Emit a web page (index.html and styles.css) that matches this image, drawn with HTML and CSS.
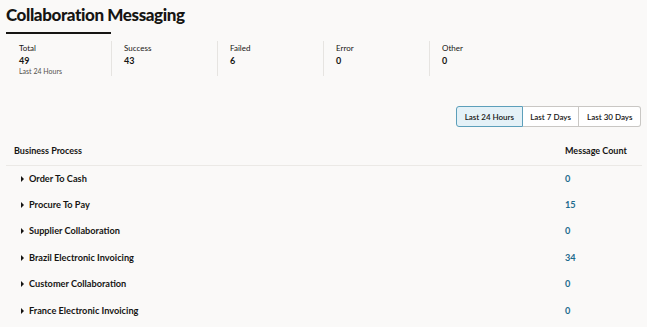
FILE: index.html
```html
<!DOCTYPE html>
<html lang="en">
<head>
  <meta charset="UTF-8" />
  <title>Collaboration Messaging</title>
  <link rel="stylesheet" href="styles.css">
</head>
<body>

  <h1 class="page-title">Collaboration Messaging</h1>

  <!-- Summary tiles -->
  <div class="stats">
    <div class="stat active">
      <div class="stat-label">Total</div>
      <div class="stat-value">49</div>
      <div class="stat-note">Last 24 Hours</div>
    </div>
    <div class="stat">
      <div class="stat-label">Success</div>
      <div class="stat-value">43</div>
    </div>
    <div class="stat">
      <div class="stat-label">Failed</div>
      <div class="stat-value">6</div>
    </div>
    <div class="stat">
      <div class="stat-label">Error</div>
      <div class="stat-value">0</div>
    </div>
    <div class="stat">
      <div class="stat-label">Other</div>
      <div class="stat-value">0</div>
    </div>
  </div>

  <!-- Range filter -->
  <div class="toolbar">
    <div class="range">
      <button class="selected">Last 24 Hours</button>
      <button>Last 7 Days</button>
      <button>Last 30 Days</button>
    </div>
  </div>

  <!-- Business process table -->
  <table class="process-table">
    <thead>
      <tr>
        <th class="col-name">Business Process</th>
        <th class="col-count">Message Count</th>
      </tr>
    </thead>
    <tbody>
      <tr><td class="col-name"><span class="caret"></span>Order To Cash</td><td class="col-count"><a href="#">0</a></td></tr>
      <tr><td class="col-name"><span class="caret"></span>Procure To Pay</td><td class="col-count"><a href="#">15</a></td></tr>
      <tr><td class="col-name"><span class="caret"></span>Supplier Collaboration</td><td class="col-count"><a href="#">0</a></td></tr>
      <tr><td class="col-name"><span class="caret"></span>Brazil Electronic Invoicing</td><td class="col-count"><a href="#">34</a></td></tr>
      <tr><td class="col-name"><span class="caret"></span>Customer Collaboration</td><td class="col-count"><a href="#">0</a></td></tr>
      <tr><td class="col-name"><span class="caret"></span>France Electronic Invoicing</td><td class="col-count"><a href="#">0</a></td></tr>
    </tbody>
  </table>

</body>
</html>
```

FILE: styles.css
```css
body {
  font-family: Lato, "Noto Sans", sans-serif;
  margin: 0;
  padding: 0 6px;
  background: #faf9f8;
  color: #161513;
}

.page-title {
  font-size: 17px;
  font-weight: 900;
  margin: 0;
  padding-top: 3px;
  height: 29px;
  line-height: 24px;
  letter-spacing: -0.4px;
}

.stats {
  display: flex;
}

/* first tile carries the dark selection bar */
.stat.active {
  width: 92px;
  padding: 8px 0 0 13px;
  border-top: 2px solid #161513;
}

.stat + .stat {
  width: 93px;
  height: 35px;
  margin-top: 9px;
  padding-left: 12px;
  border-left: 1px solid #e6e4e1;
}

.stat + .stat .stat-label {
  margin-top: 1px;
}

.stat-label {
  font-size: 8px;
  line-height: 12px;
  color: #161513;
}

.stat-value {
  font-size: 9px;
  font-weight: 700;
  line-height: 13px;
}

.stat-note {
  font-size: 7px;
  line-height: 8px;
  color: #55524d;
}

.toolbar {
  display: flex;
  justify-content: flex-end;
  margin-top: 30px;
}

.range {
  display: flex;
}

.range button {
  font-family: Lato, "Noto Sans", sans-serif;
  font-size: 8px;
  font-weight: 600;
  color: #161513;
  background: #fff;
  border: 1px solid #c9c7c4;
  height: 21px;
  padding: 0 7.6px;
  margin: 0;
  cursor: pointer;
}

.range button + button {
  border-left: none;
}

.range button:first-child {
  border-radius: 3px 0 0 3px;
}

.range button:last-child {
  border-radius: 0 3px 3px 0;
}

.range button.selected {
  background: #e4f1f7;
  border-color: #5c9fba;
}

.process-table {
  width: 636px;
  border-collapse: collapse;
  margin-top: 9px;
  font-size: 9.2px;
}

.process-table th {
  font-weight: 700;
  font-size: 9px;
  text-align: left;
  height: 29px;
  border-bottom: 1px solid #ebe9e6;
  padding: 0;
}

.process-table tbody tr {
  height: 26.4px;
}

.process-table td {
  font-weight: 700;
  padding: 0 0 1px;
}

.process-table .col-name {
  padding-left: 8px;
}

.process-table td.col-name {
  padding-left: 15px;
}

.process-table .col-count {
  width: 77px;
}

.caret {
  display: inline-block;
  width: 0;
  height: 0;
  border-top: 3px solid transparent;
  border-bottom: 3px solid transparent;
  border-left: 3px solid #161513;
  margin-right: 5px;
  vertical-align: 0;
}

.col-count a {
  color: #1d6b8e;
  text-decoration: none;
}
```
